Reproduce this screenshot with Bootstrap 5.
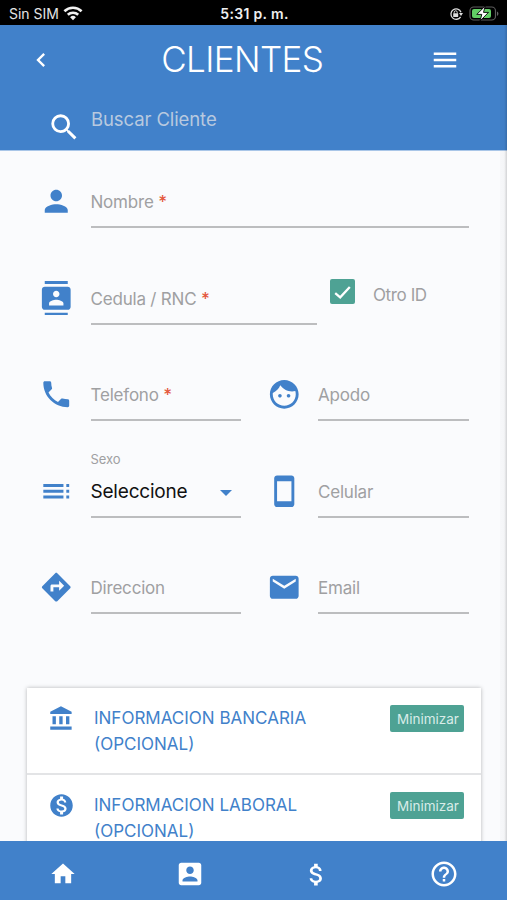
<!DOCTYPE html>
<html lang="es">
<head>
<meta charset="utf-8">
<meta name="viewport" content="width=device-width, initial-scale=1">
<title>Clientes</title>
<link href="https://cdn.jsdelivr.net/npm/bootstrap@5.3.0/dist/css/bootstrap.min.css" rel="stylesheet">
<style>
:root{--blue:#4181ca;--teal:#4ea294;--gray:#9fa0a2}
html,body{height:100%;overflow:hidden}
body{font-family:Inter,"Liberation Sans",sans-serif;background:#fafbfd;color:#000}
svg{display:block;fill:currentColor;flex:none}
.screen{height:900px}
.status{height:25px;background:#000;color:#e4e4e4;font-size:14px;padding:2px 7px 0 9px;line-height:23px}
.status-side{flex:1 1 0}
.status-time{font-size:14px;font-weight:600;letter-spacing:.33px;color:#eee}
.top{height:130px;background:var(--blue);color:#fff;border-bottom:1px solid #a9c6e8}
.top-bar{height:69px;padding:0 47px 0 26.5px}
.top h1{font-size:35px;font-weight:300;line-height:69px;letter-spacing:-.6px}
.search{padding:16px 0 0 47px}
.search span{font-size:18.5px;color:#b8c9df;line-height:24px;margin:-3px 0 0 9.5px;letter-spacing:-.1px}
.edge{width:7px;top:25px;bottom:59px;right:0;background:linear-gradient(90deg,rgba(0,0,0,.015),rgba(0,0,0,.025) 60%,rgba(0,0,0,.16))}
.content{min-height:0;padding-top:27px}
.fields{padding:0 38.5px 0 39px;display:grid;grid-template-columns:202px 202px;column-gap:25.5px;row-gap:46.5px}
.field-row{height:50px;color:var(--blue)}
.field-row>svg{margin-top:6px}
.wide{grid-column:1/3}
.entry{margin-left:17px;border-bottom:2px solid #bcbdbf;color:var(--gray);font-size:17px;line-height:49px;white-space:nowrap;letter-spacing:-.2px}
.entry b{color:#e4593f;font-weight:500}
.tiny-label{font-size:13px;line-height:16px;top:-17px;left:0;letter-spacing:-.1px}
.picked{font-size:19px;color:#111;letter-spacing:-.2px}
.arrow{border:6px solid transparent;border-top-color:var(--blue);border-bottom:0;margin-right:9px;margin-top:3px}
.tick{width:25px;height:25px;background:var(--teal);border-radius:2px;margin:4.5px 0 0 13.5px}
.other{font-size:17px;line-height:24px;color:var(--gray);margin:8px 0 0 18px;letter-spacing:-.4px}
.panel{margin:74px 26px 0 27px;background:#fff;box-shadow:0 0 4px rgba(0,0,0,.28)}
.panel-item{height:87px;border-bottom:2px solid #e3e4e6;color:var(--blue);padding:17px 17px 0 20.5px}
.panel-item p{font-size:17px;line-height:26px;margin:0 0 0 19.5px}
.mini{background:var(--teal);color:#d9ece8;border-radius:2px;height:27px;width:74px;font-size:13.5px;line-height:28px;text-align:center;padding-left:2px}
.tabs{height:59px;background:var(--blue);color:#fff;padding-top:7px}
</style>
</head>
<body>
<div class="screen d-flex flex-column position-relative overflow-hidden">
  <div class="status d-flex align-items-center">
    <div class="status-side d-flex align-items-center">
      <span id="sim">Sin SIM</span>
      <svg class="ms-1" width="20" height="15" viewBox="0 0 20 15" fill="none" stroke="#f2f2f2" stroke-width="2.6" style="fill:none"><path d="M1.4 5.2a12.4 12.4 0 0 1 17.2 0M4.8 8.8a7.6 7.6 0 0 1 10.4 0"/><path d="M10 14.2l-2.9-3a4.2 4.2 0 0 1 5.8 0z" fill="#f2f2f2" stroke="none"/></svg>
    </div>
    <div class="status-time">5:31 p. m.</div>
    <div class="status-side d-flex align-items-center justify-content-end">
      <svg width="14" height="14" viewBox="0 0 14 14"><path d="M11.6 9.8A5.2 5.2 0 1 1 12 5.2" fill="none" stroke="#ddd" stroke-width="1.3"/><path d="M10 6h4l-2 3z" fill="#ddd"/><rect x="4.2" y="6.3" width="5" height="3.8" rx=".5" fill="#ddd"/><path d="M5.2 6.5V5.3a1.5 1.5 0 0 1 3 0v1.2" fill="none" stroke="#ddd"/></svg>
      <svg class="ms-1" width="33" height="17" viewBox="0 0 33 17"><rect x="3" y="2" width="25.5" height="13" rx="3.8" fill="none" stroke="#5c5c5c" stroke-width="1.2"/><rect x="5" y="4" width="19" height="9" rx="2" fill="#62cf65"/><path d="M30 6.5a2.4 2.4 0 0 1 0 4.4z" fill="#666"/><path d="M18.2 1L9.8 9.4h5L13 16l8.5-8.6h-5z" fill="#fff" stroke="#000" stroke-width=".9"/></svg>
    </div>
  </div>

  <header class="top">
    <div class="top-bar d-flex align-items-center justify-content-between">
      <svg width="28" height="28" viewBox="0 0 24 24"><path d="M15.41 16.59L10.83 12l4.58-4.59L14 6l-6 6 6 6z"/></svg>
      <h1 class="m-0"><span id="title">CLIENTES</span></h1>
      <svg width="30" height="30" viewBox="0 0 24 24"><path d="M3 18h18v-2H3v2zm0-5h18v-2H3v2zm0-7v2h18V6H3z"/></svg>
    </div>
    <div class="search d-flex">
      <svg width="34.5" height="34.5" viewBox="0 0 24 24"><path d="M15.5 14h-.79l-.28-.27A6.47 6.47 0 0 0 16 9.5 6.5 6.5 0 1 0 9.5 16c1.61 0 3.09-.59 4.23-1.57l.27.28v.79l5 4.99L20.49 19l-4.99-5zm-6 0C7.01 14 5 11.99 5 9.5S7.01 5 9.5 5 14 7.01 14 9.5 11.99 14 9.5 14z"/></svg>
      <span>Buscar Cliente</span>
    </div>
  </header>

  <main class="content flex-grow-1 overflow-hidden">
    <div class="fields">
      <div class="field-row wide d-flex">
        <svg width="34.5" height="34.5" viewBox="0 0 24 24"><path d="M12 12c2.21 0 4-1.79 4-4s-1.79-4-4-4-4 1.79-4 4 1.79 4 4 4zm0 2c-2.67 0-8 1.34-8 4v2h16v-2c0-2.66-5.33-4-8-4z"/></svg>
        <div class="entry flex-grow-1">Nombre <b>*</b></div>
      </div>
      <div class="field-row wide d-flex">
        <svg width="34.5" height="34.5" viewBox="0 0 24 24"><path d="M20 0H4v2h16V0zM4 24h16v-2H4v2zM20 4H4c-1.1 0-2 .9-2 2v12c0 1.1.9 2 2 2h16c1.1 0 2-.9 2-2V6c0-1.1-.9-2-2-2zm-8 2.75c1.24 0 2.25 1.01 2.25 2.25s-1.01 2.25-2.25 2.25S9.75 10.24 9.75 9 10.76 6.75 12 6.75zM17 17H7v-1.5c0-1.67 3.33-2.5 5-2.5s5 .83 5 2.5V17z"/></svg>
        <div class="entry" style="width:226px">Cedula / RNC <b>*</b></div>
        <div class="tick"><svg width="25" height="25" viewBox="0 0 25 25" style="fill:none"><path d="M5.2 14.2l5 4.2L19.8 8" stroke="#fff" stroke-width="2.3"/></svg></div>
        <div class="other">Otro ID</div>
      </div>
      <div class="field-row d-flex">
        <svg width="34.5" height="34.5" viewBox="0 0 24 24"><path d="M6.62 10.79c1.44 2.83 3.76 5.14 6.59 6.59l2.2-2.2c.27-.27.67-.36 1.02-.24 1.12.37 2.33.57 3.57.57.55 0 1 .45 1 1V20c0 .55-.45 1-1 1-9.39 0-17-7.61-17-17 0-.55.45-1 1-1h3.5c.55 0 1 .45 1 1 0 1.25.2 2.45.57 3.57.11.35.03.74-.25 1.02l-2.2 2.2z"/></svg>
        <div class="entry flex-grow-1">Telefono <b>*</b></div>
      </div>
      <div class="field-row d-flex">
        <svg width="34.5" height="34.5" viewBox="0 0 24 24"><path d="M9 11.75c-.69 0-1.25.56-1.25 1.25s.56 1.25 1.25 1.25 1.25-.56 1.25-1.25-.56-1.25-1.25-1.25zm6 0c-.69 0-1.25.56-1.25 1.25s.56 1.25 1.25 1.25 1.25-.56 1.25-1.25-.56-1.25-1.25-1.25zM12 2C6.48 2 2 6.48 2 12s4.48 10 10 10 10-4.48 10-10S17.52 2 12 2zm0 18c-4.41 0-8-3.59-8-8 0-.29.02-.58.05-.86 2.36-1.05 4.23-2.98 5.21-5.37C11.07 8.33 14.05 10 17.42 10c.78 0 1.53-.09 2.25-.26.21.71.33 1.47.33 2.26 0 4.41-3.59 8-8 8z"/></svg>
        <div class="entry flex-grow-1">Apodo</div>
      </div>
      <div class="field-row d-flex">
        <svg width="34.5" height="34.5" viewBox="0 0 24 24"><path d="M3 9h14V7H3v2zm0 4h14v-2H3v2zm0 4h14v-2H3v2zm16 0h2v-2h-2v2zm0-10v2h2V7h-2zm0 6h2v-2h-2v2z"/></svg>
        <div class="entry flex-grow-1 position-relative d-flex align-items-center justify-content-between">
          <span class="tiny-label position-absolute">Sexo</span>
          <span class="picked">Seleccione</span>
          <span class="arrow"></span>
        </div>
      </div>
      <div class="field-row d-flex">
        <svg width="34.5" height="34.5" viewBox="0 0 24 24"><path d="M17 1.01L7 1c-1.1 0-2 .9-2 2v18c0 1.1.9 2 2 2h10c1.1 0 2-.9 2-2V3c0-1.1-.9-1.99-2-1.99zM17 19H7V5h10v14z"/></svg>
        <div class="entry flex-grow-1">Celular</div>
      </div>
      <div class="field-row d-flex">
        <svg width="34.5" height="34.5" viewBox="0 0 24 24"><path d="M21.71 11.29l-9-9c-.39-.39-1.02-.39-1.41 0l-9 9c-.39.39-.39 1.02 0 1.41l9 9c.39.39 1.02.39 1.41 0l9-9c.39-.38.39-1.01 0-1.41zM14 14.5V12h-4v3H8v-4c0-.55.45-1 1-1h5V7.5l3.5 3.5-3.5 3.5z"/></svg>
        <div class="entry flex-grow-1">Direccion</div>
      </div>
      <div class="field-row d-flex">
        <svg width="34.5" height="34.5" viewBox="0 0 24 24"><path d="M20 4H4c-1.1 0-1.99.9-1.99 2L2 18c0 1.1.9 2 2 2h16c1.1 0 2-.9 2-2V6c0-1.1-.9-2-2-2zm0 4l-8 5-8-5V6l8 5 8-5v2z"/></svg>
        <div class="entry flex-grow-1">Email</div>
      </div>
    </div>

    <div class="panel">
      <div class="panel-item d-flex">
        <svg width="27" height="27" viewBox="0 0 24 24"><path d="M4 10v7h3v-7H4zm6 0v7h3v-7h-3zM2 22h19v-3H2v3zm14-12v7h3v-7h-3zm-4.5-9L2 6v2h19V6l-9.5-5z"/></svg>
        <p class="flex-grow-1">INFORMACION BANCARIA<br>(OPCIONAL)</p>
        <div class="mini">Minimizar</div>
      </div>
      <div class="panel-item d-flex">
        <svg width="27" height="27" viewBox="0 0 24 24"><path d="M12 2C6.48 2 2 6.48 2 12s4.48 10 10 10 10-4.48 10-10S17.52 2 12 2zm1.41 16.09V20h-2.67v-1.93c-1.71-.36-3.16-1.46-3.27-3.4h1.96c.1 1.05.82 1.87 2.65 1.87 1.96 0 2.4-.98 2.4-1.59 0-.83-.44-1.61-2.67-2.14-2.48-.6-4.18-1.62-4.18-3.67 0-1.72 1.39-2.84 3.11-3.21V4h2.67v1.95c1.86.45 2.79 1.86 2.85 3.39H14.3c-.05-1.11-.64-1.87-2.22-1.87-1.5 0-2.4.68-2.4 1.64 0 .84.65 1.39 2.67 1.91s4.18 1.39 4.18 3.91c-.01 1.83-1.38 2.83-3.12 3.16z"/></svg>
        <p class="flex-grow-1">INFORMACION LABORAL<br>(OPCIONAL)</p>
        <div class="mini">Minimizar</div>
      </div>
    </div>
  </main>

  <nav class="tabs row g-0 align-items-center flex-shrink-0">
    <div class="col d-flex justify-content-center"><svg width="28" height="28" viewBox="0 0 24 24"><path d="M10 20v-6h4v6h5v-8h3L12 3 2 12h3v8z"/></svg></div>
    <div class="col d-flex justify-content-center"><svg width="30" height="30" viewBox="0 0 24 24"><path d="M3 5v14c0 1.1.89 2 2 2h14c1.1 0 2-.9 2-2V5c0-1.1-.9-2-2-2H5c-1.11 0-2 .9-2 2zm12 4c0 1.66-1.34 3-3 3s-3-1.34-3-3 1.34-3 3-3 3 1.34 3 3zm-9 8c0-2 4-3.1 6-3.1s6 1.1 6 3.1v1H6v-1z"/></svg></div>
    <div class="col d-flex justify-content-center"><svg width="29" height="29" viewBox="0 0 24 24"><path d="M11.8 10.9c-2.27-.59-3-1.2-3-2.15 0-1.09 1.01-1.85 2.7-1.85 1.78 0 2.44.85 2.5 2.1h2.21c-.07-1.72-1.12-3.3-3.21-3.81V3h-3v2.16c-1.94.42-3.5 1.68-3.5 3.61 0 2.31 1.91 3.46 4.7 4.13 2.5.6 3 1.48 3 2.41 0 .69-.49 1.79-2.7 1.79-2.06 0-2.87-.92-2.98-2.1h-2.2c.12 2.19 1.76 3.42 3.68 3.83V21h3v-2.15c1.95-.37 3.5-1.5 3.5-3.55 0-2.84-2.43-3.81-4.7-4.4z"/></svg></div>
    <div class="col d-flex justify-content-center"><svg width="30" height="30" viewBox="0 0 24 24"><path d="M11 18h2v-2h-2v2zm1-16C6.48 2 2 6.48 2 12s4.48 10 10 10 10-4.48 10-10S17.52 2 12 2zm0 18c-4.41 0-8-3.59-8-8s3.59-8 8-8 8 3.59 8 8-3.59 8-8 8zm0-14c-2.21 0-4 1.79-4 4h2c0-1.1.9-2 2-2s2 .9 2 2c0 2-3 1.75-3 5h2c0-2.25 3-2.5 3-5 0-2.21-1.79-4-4-4z"/></svg></div>
  </nav>
  <div class="edge position-absolute"></div>
</div>
<script src="https://cdn.jsdelivr.net/npm/bootstrap@5.3.0/dist/js/bootstrap.bundle.min.js"></script>
</body>
</html>
